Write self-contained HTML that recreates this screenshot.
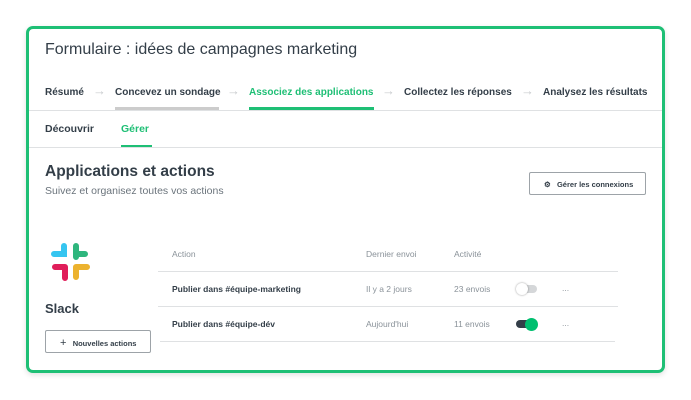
<!DOCTYPE html>
<html><head><meta charset="utf-8"><style>
*{margin:0;padding:0;box-sizing:border-box}
body{width:691px;height:400px;background:#fff;font-family:"Liberation Sans",sans-serif;position:relative;overflow:hidden;color:#333e48}
.card{position:absolute;left:26px;top:26px;width:639px;height:347px;border:3px solid #1ebf75;border-radius:7px;background:#fff;box-shadow:0 2px 6px rgba(0,0,0,.12)}
.a{position:absolute;white-space:nowrap}
.line{position:absolute;height:1px;background:#dfe1e3}
.tb{font-size:10px;font-weight:bold}
.arr{color:#c8cbce;font-size:13px}
.th{font-size:8.5px;color:#8a9299}
.td{font-size:8.5px;color:#8a9299}
</style></head><body>
<div class="card"></div>
<div class="a" style="left:45px;top:41px;font-size:16px;color:#333e48">Formulaire : idées de campagnes marketing</div>
<div class="a tb" style="left:45px;top:87px">Résumé</div>
<div class="a arr" style="left:93px;top:83px">→</div>
<div class="a tb" style="left:115px;top:87px">Concevez un sondage</div>
<div class="a" style="left:115px;top:107px;width:104px;height:3px;background:#ccc"></div>
<div class="a arr" style="left:227px;top:83px">→</div>
<div class="a tb" style="left:249px;top:87px;color:#1ebf75">Associez des applications</div>
<div class="a" style="left:249px;top:107px;width:125px;height:3px;background:#1ebf75"></div>
<div class="a arr" style="left:382px;top:83px">→</div>
<div class="a tb" style="left:404px;top:87px">Collectez les réponses</div>
<div class="a arr" style="left:521px;top:83px">→</div>
<div class="a tb" style="left:543px;top:87px">Analysez les résultats</div>
<div class="line" style="left:29px;top:110px;width:633px"></div>
<div class="a tb" style="left:45px;top:123px;font-size:10.5px">Découvrir</div>
<div class="a tb" style="left:121px;top:123px;font-size:10.5px;color:#1ebf75">Gérer</div>
<div class="a" style="left:121px;top:145px;width:31px;height:3px;background:#1ebf75"></div>
<div class="line" style="left:29px;top:147px;width:633px"></div>
<div class="a" style="left:45px;top:163px;font-size:15.5px;font-weight:bold">Applications et actions</div>
<div class="a" style="left:45px;top:185px;font-size:10.5px;color:#6b747c">Suivez et organisez toutes vos actions</div>
<div class="a" style="left:529px;top:172px;width:117px;height:23px;border:1px solid #9da3a8;border-radius:2px;font-size:7.5px;font-weight:bold;padding:7px 0 0 14px">⚙&nbsp;&nbsp;&nbsp;Gérer les connexions</div>
<svg class="a" style="left:50px;top:242px" width="42" height="40" viewBox="0 0 42 40">
<g stroke-linecap="round" stroke-width="6" fill="none">
<path d="M4 12H14V4" stroke="#36c5f0"/>
<path d="M26 15V4M26 12H35" stroke="#2eb67d"/>
<path d="M26 25H37M26 25V35" stroke="#ecb22e"/>
<path d="M15 25V36M15 25H5" stroke="#e01e5a"/>
</g>
<g fill="#fff"><rect x="14" y="9" width="3" height="3" opacity="0"/></g>
</svg>
<div class="a" style="left:45px;top:301px;font-size:13px;font-weight:bold">Slack</div>
<div class="a" style="left:45px;top:330px;width:106px;height:23px;border:1px solid #9da3a8;border-radius:2px;font-size:7.5px;font-weight:bold;padding:6px 0 0 14px"><span style="font-size:11px;font-weight:normal">+</span>&nbsp;&nbsp;&nbsp;Nouvelles actions</div>
<div class="a th" style="left:172px;top:249px">Action</div>
<div class="a th" style="left:366px;top:249px">Dernier envoi</div>
<div class="a th" style="left:454px;top:249px">Activité</div>
<div class="line" style="left:158px;top:271px;width:460px"></div>
<div class="a" style="left:172px;top:284px;font-size:8.5px;font-weight:bold">Publier dans #équipe-marketing</div>
<div class="a td" style="left:366px;top:284px">Il y a 2 jours</div>
<div class="a td" style="left:454px;top:284px">23 envois</div>
<div class="a" style="left:517px;top:285px;width:20px;height:8px;border-radius:4px;background:#d5d7d9"></div>
<div class="a" style="left:516px;top:283px;width:12px;height:12px;border-radius:6px;background:#fff;box-shadow:0 0 2px rgba(0,0,0,.4)"></div>
<div class="a td" style="left:562px;top:283px">...</div>
<div class="line" style="left:158px;top:306px;width:460px"></div>
<div class="a" style="left:172px;top:319px;font-size:8.5px;font-weight:bold">Publier dans #équipe-dév</div>
<div class="a td" style="left:366px;top:319px">Aujourd'hui</div>
<div class="a td" style="left:454px;top:319px">11 envois</div>
<div class="a" style="left:516px;top:320px;width:20px;height:8px;border-radius:4px;background:#333e48"></div>
<div class="a" style="left:525px;top:318px;width:13px;height:13px;border-radius:7px;background:#00bf6f"></div>
<div class="a td" style="left:562px;top:318px">...</div>
<div class="line" style="left:160px;top:341px;width:455px"></div>
</body></html>
